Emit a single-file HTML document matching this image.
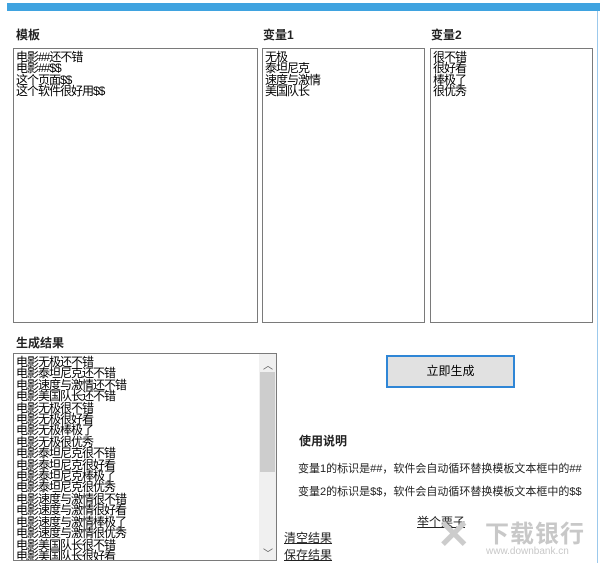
<html><head><style>
body{margin:0;width:600px;height:563px;background:#fff;position:relative;overflow:hidden;font-family:"Liberation Sans","Noto Sans CJK SC",sans-serif;font-size:12px;color:#000}
div{position:absolute}
.lbl{font-weight:bold;font-size:12px;color:#222}
.ta{border:1px solid #7a7a7a;background:#fff;box-sizing:border-box;padding:3px 2px;line-height:11.4px;font-size:12px;letter-spacing:-1px;overflow:hidden;white-space:pre}
.u{text-decoration:underline;color:#222}
</style></head><body>
<div style="left:7px;top:3px;width:593px;height:8px;background:#3fa3e0"></div>
<div style="left:597px;top:11px;width:1px;height:552px;background:#9cc9ec"></div>
<div class="lbl" style="left:16px;top:26px">模板</div>
<div class="lbl" style="left:263px;top:26px">变量1</div>
<div class="lbl" style="left:431px;top:26px">变量2</div>
<div class="ta" style="left:13px;top:48px;width:245px;height:275px">电影##还不错
电影##$$
这个页面$$
这个软件很好用$$</div>
<div class="ta" style="left:262px;top:48px;width:163px;height:275px">无极
泰坦尼克
速度与激情
美国队长</div>
<div class="ta" style="left:430px;top:48px;width:163px;height:275px">很不错
很好看
棒极了
很优秀</div>
<div class="lbl" style="left:16px;top:334px">生成结果</div>
<div class="ta" style="left:13px;top:353px;width:264px;height:208px;padding-right:20px">电影无极还不错
电影泰坦尼克还不错
电影速度与激情还不错
电影美国队长还不错
电影无极很不错
电影无极很好看
电影无极棒极了
电影无极很优秀
电影泰坦尼克很不错
电影泰坦尼克很好看
电影泰坦尼克棒极了
电影泰坦尼克很优秀
电影速度与激情很不错
电影速度与激情很好看
电影速度与激情棒极了
电影速度与激情很优秀
电影美国队长很不错
电影美国队长很好看</div>
<div style="left:259px;top:354px;width:17px;height:206px;background:#f0f0f0"></div>
<div style="left:260px;top:372px;width:15px;height:100px;background:#cdcdcd"></div>
<div style="left:263px;top:357px;font-size:10px;color:#555">︿</div>
<div style="left:263px;top:545px;font-size:10px;color:#555">﹀</div>
<div style="left:386px;top:355px;width:125px;height:29px;border:2px solid #2f86d6;background:#e1e1e1;text-align:center;line-height:29px;font-size:12px">立即生成</div>
<div class="lbl" style="left:299px;top:432px">使用说明</div>
<div style="left:298px;top:460px;font-size:11px;color:#222">变量1的标识是##，软件会自动循环替换模板文本框中的##</div>
<div style="left:298px;top:483px;font-size:11px;color:#222">变量2的标识是$$，软件会自动循环替换模板文本框中的$$</div>
<div class="u" style="left:417px;top:513px">举个栗子</div>
<div class="u" style="left:284px;top:529px">清空结果</div>
<div class="u" style="left:284px;top:546px">保存结果</div>
<div style="left:437px;top:512px;font-size:40px;color:#ccc;font-weight:bold">✕</div>
<div style="left:485px;top:514px;font-size:24px;color:#c8c8c8;font-weight:bold;letter-spacing:1px">下载银行</div>
<div style="left:486px;top:546px;font-size:10px;color:#c8c8c8">www.downbank.cn</div>
</body></html>
